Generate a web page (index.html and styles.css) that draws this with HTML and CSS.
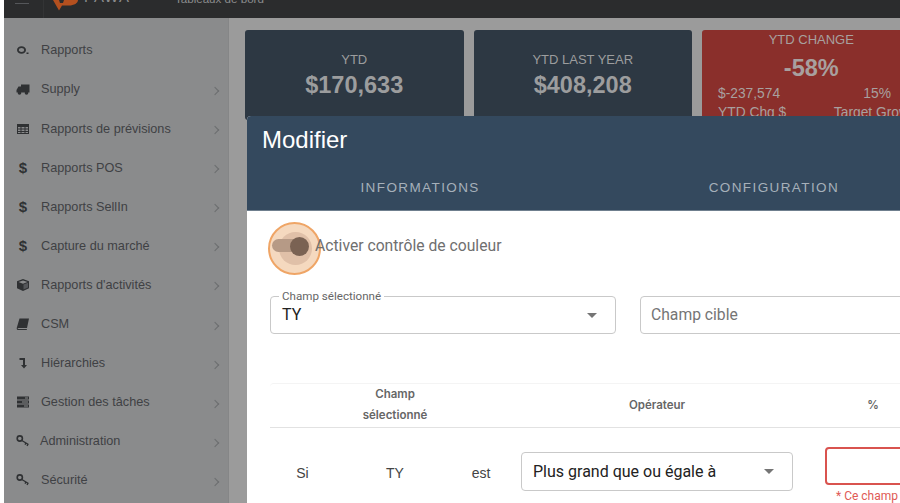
FILE: index.html
```html
<!DOCTYPE html>
<html lang="fr">
  <head>
    <meta charset="UTF-8" />
    <title>Tableaux de bord</title>
    <link rel="stylesheet" href="styles.css">
  </head>
  <body>
    <div class="app">
      <header class="topbar">
        <div class="burger"><span></span></div>
        <svg class="logo" viewBox="0 0 26 11" width="26" height="11"><path d="M0 0L6 10.500 9 5.500H16C21 5.500 25 3 25 0H11L10 3 7 3 6 0z" fill="#b4501f"/></svg>
        <span class="brand">PAWA</span>
        <span class="page-title">Tableaux de bord</span>
      </header>
      <div class="body-row">
        <nav class="sidebar">
          <a class="nav-item">
            <svg class="ico" viewBox="0 0 14 14"><ellipse cx="5.500" cy="7" rx="3.600" ry="2.800" fill="none" stroke="#2f3133" stroke-width="1.800"/><path d="M10.500 9.500h2v1.500h-2z" fill="#2f3133"/></svg>
            <span class="label">Rapports</span>
          </a>
          <a class="nav-item">
            <svg class="ico" viewBox="0 0 14 14"><path d="M5 2.500h8.500v8H5z" fill="#2f3133"/><path d="M.5 8l2-3.500H5v6H.5z" fill="#2f3133"/><circle cx="3.500" cy="11" r="1.800" fill="#2f3133"/><circle cx="10.500" cy="11" r="1.800" fill="#2f3133"/></svg>
            <span class="label">Supply</span><span class="chev"></span>
          </a>
          <a class="nav-item">
            <svg class="ico" viewBox="0 0 14 14"><path fill-rule="evenodd" d="M1 2h12v10H1zM2 5v1.500h2.500V5zM5.500 5v1.500H8.500V5zM9.500 5v1.500H12V5zM2 7.500V9h2.500V7.500zM5.500 7.500V9H8.500V7.500zM9.500 7.500V9H12V7.500zM2 10v1h2.500v-1zM5.500 10v1H8.500v-1zM9.500 10v1H12v-1z" fill="#2f3133"/></svg>
            <span class="label">Rapports de prévisions</span><span class="chev"></span>
          </a>
          <a class="nav-item">
            <span class="ico-dollar">$</span>
            <span class="label">Rapports POS</span><span class="chev"></span>
          </a>
          <a class="nav-item">
            <span class="ico-dollar">$</span>
            <span class="label">Rapports SellIn</span><span class="chev"></span>
          </a>
          <a class="nav-item">
            <span class="ico-dollar">$</span>
            <span class="label">Capture du marché</span><span class="chev"></span>
          </a>
          <a class="nav-item">
            <svg class="ico" viewBox="0 0 14 14"><path d="M7 1l6 2.200v7L7 13 1 10.200v-7z" fill="#2f3133"/><path d="M2.500 4L7 5.800 11.500 4 7 2.400z" fill="#8a8b8c"/><path d="M7.500 6.500v5l4.500-2V4.800z" fill="#55575a"/></svg>
            <span class="label">Rapports d'activités</span><span class="chev"></span>
          </a>
          <a class="nav-item">
            <svg class="ico" viewBox="0 0 14 14"><path d="M3.500 1.500H13L11 11H2.500C1.500 11 1 12 2.500 12H11l-.3 1H2C.5 13 .5 11.500 1 10z" fill="#2f3133"/></svg>
            <span class="label">CSM</span><span class="chev"></span>
          </a>
          <a class="nav-item">
            <svg class="ico" viewBox="0 0 14 14"><path d="M3.500 2H9v7h2l-3 3.500L5 9h2V4H3.500z" fill="#2f3133"/></svg>
            <span class="label">Hiérarchies</span><span class="chev"></span>
          </a>
          <a class="nav-item">
            <svg class="ico" viewBox="0 0 14 14"><path d="M1 1.500h12v3H1zM1 5.500h12v3H1zM1 9.500h12v3H1z" fill="#2f3133"/><path d="M9 2.500h3v1H9zM6 6.500h6v1H6zM8 10.500h4v1H8z" fill="#8a8b8c"/></svg>
            <span class="label">Gestion des tâches</span><span class="chev"></span>
          </a>
          <a class="nav-item nav-admin">
            <svg class="ico" viewBox="0 0 14 14"><circle cx="3.800" cy="4.500" r="2.600" fill="none" stroke="#2f3133" stroke-width="1.600"/><path d="M5.800 6.500L12.500 10.500M10 9l-1 1.700M12 10.200l-1 1.700" fill="none" stroke="#2f3133" stroke-width="1.400"/></svg>
            <span class="label">Administration</span><span class="chev"></span>
          </a>
          <a class="nav-item">
            <svg class="ico" viewBox="0 0 14 14"><circle cx="3.800" cy="4.500" r="2.600" fill="none" stroke="#2f3133" stroke-width="1.600"/><path d="M5.800 6.500L12.500 10.500M10 9l-1 1.700M12 10.200l-1 1.700" fill="none" stroke="#2f3133" stroke-width="1.400"/></svg>
            <span class="label">Sécurité</span><span class="chev"></span>
          </a>
        </nav>
        <main class="content">
          <div class="cards">
            <div class="card card-dark">
              <div class="card-title">YTD</div>
              <div class="card-value">$170,633</div>
            </div>
            <div class="card card-dark">
              <div class="card-title">YTD LAST YEAR</div>
              <div class="card-value">$408,208</div>
            </div>
            <div class="card card-red">
              <div class="card-title">YTD CHANGE</div>
              <div class="card-value">-58%</div>
              <div class="card-split">
                <div><div class="split-num">$-237,574</div><div class="split-name">YTD Chg $</div></div>
                <div class="split-right"><div class="split-num">15%</div><div class="split-name">Target Growth</div></div>
              </div>
            </div>
          </div>
        </main>
      </div>

      <section class="modal">
        <div class="modal-head">
          <h2>Modifier</h2>
          <div class="tabs">
            <div class="tab">INFORMATIONS</div>
            <div class="tab">CONFIGURATION</div>
          </div>
        </div>
        <div class="modal-body">
          <div class="switch-row">
            <span class="switch">
              <span class="ripple"></span>
              <span class="track"></span>
              <span class="thumb"></span>
            </span>
            <span class="switch-label">Activer contrôle de couleur</span>
          </div>
          <div class="fields">
            <div class="field field-select">
              <span class="field-legend">Champ sélectionné</span>
              <span class="field-value">TY</span>
              <span class="caret"></span>
            </div>
            <div class="field field-target">
              <span class="field-hint">Champ cible</span>
            </div>
          </div>
          <div class="rules">
            <div class="rules-row rules-head">
              <div class="col-si"></div>
              <div class="col-field">Champ sélectionné</div>
              <div class="col-est"></div>
              <div class="col-op">Opérateur</div>
              <div class="col-pct">%</div>
            </div>
            <div class="rules-row rules-line">
              <div class="col-si">Si</div>
              <div class="col-field">TY</div>
              <div class="col-est">est</div>
              <div class="col-op">
                <div class="op-select"><span>Plus grand que ou égale à</span><span class="caret"></span></div>
              </div>
              <div class="col-pct">
                <div class="pct-input"></div>
                <div class="pct-error">* Ce champ est requis</div>
              </div>
            </div>
          </div>
        </div>
      </section>
    </div>
  </body>
</html>
```

FILE: styles.css
```css
* {
  margin: 0;
  padding: 0;
  box-sizing: border-box;
}
html,
body {
  width: 900px;
  height: 503px;
  overflow: hidden;
  background-color: #fff;
  font-family: "Liberation Sans", Arial, sans-serif;
}
.app {
  position: relative;
  width: 896px;
  height: 503px;
  margin-left: 4px;
  overflow: hidden;
}
.topbar {
  height: 18px;
  background-color: #2b2c2d;
  display: flex;
  align-items: flex-start;
  color: #8b8c8d;
  overflow: hidden;
}
.burger {
  width: 40px;
  height: 18px;
  padding: 3px 0 0 11px;
  border-right: 1px solid #333435;
}
.burger span {
  display: block;
  width: 14px;
  height: 1px;
  background-color: #55575a;
}
.logo {
  margin-left: 9px;
}
.brand {
  margin: -11px 0 0 5px;
  font-size: 15px;
  line-height: 15px;
  letter-spacing: 1px;
}
.page-title {
  margin: -8px 0 0 45px;
  font-size: 11.600px;
  line-height: 14px;
}
.body-row {
  display: flex;
  height: 485px;
}
.sidebar {
  width: 225px;
  background-color: #8a8b8c;
  border-right: 1px solid #858687;
  padding-top: 12.800px;
}
.nav-item {
  display: flex;
  align-items: center;
  height: 39.100px;
  padding-left: 12px;
  color: #3f4144;
  font-size: 12.700px;
}
.ico {
  width: 14px;
  height: 14px;
  flex-shrink: 0;
}
.ico-dollar {
  width: 14px;
  text-align: center;
  font-size: 15px;
  font-weight: bold;
  color: #2f3133;
}
.label {
  margin-left: 11px;
  flex: 1;
}
.nav-admin .label {
  margin-left: 10px;
}
.chev {
  width: 6px;
  height: 6px;
  margin-right: 10px;
  margin-top: 3px;
  border-top: 1px solid #6b6d6f;
  border-right: 1px solid #6b6d6f;
  transform: rotate(45deg);
}
.content {
  flex: 1;
  background-color: #9b9b9b;
  padding: 12px 0 0 16px;
  overflow: hidden;
}
.cards {
  display: flex;
  gap: 10px;
  width: 720px;
}
.card {
  width: 218.500px;
  height: 90px;
  flex-shrink: 0;
  border-radius: 3px;
  color: #9c9d9e;
  text-align: center;
}
.card-dark {
  background-color: #2d3843;
  padding-top: 22px;
}
.card-red {
  background-color: #8a2f2b;
  padding-top: 2px;
  color: #a8a09f;
}
.card-title {
  font-size: 13px;
  line-height: 16px;
}
.card-value {
  font-size: 23.500px;
  font-weight: bold;
  line-height: 31px;
  margin-top: 2px;
}
.card-red .card-value {
  margin-top: 3px;
  line-height: 34px;
}
.card-split {
  display: flex;
  justify-content: space-between;
  padding-left: 16px;
  font-size: 13.800px;
  text-align: left;
}
.split-num {
  line-height: 17px;
}
.split-name {
  line-height: 17px;
  margin-top: 2px;
  white-space: nowrap;
}
.split-right {
  text-align: center;
}
/* modal sits over the dimmed dashboard */
.modal {
  position: absolute;
  left: 243px;
  top: 116px;
  width: 700px;
  height: 420px;
  background-color: #fff;
  border-radius: 4px 0 0 0;
}
.modal-head {
  height: 95px;
  background-color: #34495e;
  border-bottom: 1px solid #6f7f8e;
  border-radius: 4px 0 0 0;
}
.modal-head h2 {
  font-size: 24px;
  font-weight: normal;
  color: #fff;
  line-height: 28px;
  padding: 10px 0 0 15px;
}
.tabs {
  display: flex;
  gap: 7.500px;
  margin-top: 24px;
}
.tab {
  width: 347px;
  text-align: center;
  color: #a6b0ba;
  font-size: 13.500px;
  letter-spacing: 1.400px;
  line-height: 20px;
}
.modal-body {
  padding-left: 23px;
}
.switch-row {
  display: flex;
  align-items: center;
  height: 68px;
}
.switch {
  position: relative;
  display: block;
  width: 44px;
  height: 20px;
}
.ripple {
  position: absolute;
  left: -2px;
  top: -13px;
  width: 53px;
  height: 53px;
  border-radius: 50%;
  background-color: #f5d9bf;
  border: 2px solid #efa566;
}
.ripple::after {
  content: "";
  position: absolute;
  left: 9px;
  top: 8px;
  width: 33px;
  height: 33px;
  border-radius: 50%;
  background-color: #e0c0a8;
}
.track {
  position: absolute;
  left: 2px;
  top: 4px;
  width: 33px;
  height: 13px;
  border-radius: 7px;
  background-color: #b69a86;
}
.thumb {
  position: absolute;
  left: 20px;
  top: 2px;
  width: 19px;
  height: 19px;
  border-radius: 50%;
  background-color: #7a6253;
}
.switch-label {
  position: relative;
  margin: 1px 0 0 1px;
  font-family: Roboto, "Liberation Sans", sans-serif;
  font-size: 15.700px;
  line-height: 20px;
  color: #6f6f6f;
}
.fields {
  display: flex;
  gap: 24px;
  margin-top: 17px;
}
.field {
  position: relative;
  height: 38px;
  flex-shrink: 0;
  border: 1px solid #c9c9c9;
  border-radius: 4px;
  display: flex;
  align-items: center;
  padding: 0 11px;
  font-family: Roboto, "Liberation Sans", sans-serif;
}
.field-select {
  width: 346px;
  justify-content: space-between;
  padding-right: 18px;
}
.field-target {
  width: 400px;
  padding-left: 10px;
}
.field-legend {
  position: absolute;
  left: 8px;
  top: -7px;
  padding: 0 3px;
  background-color: #fff;
  font-size: 11.600px;
  line-height: 13px;
  color: #666;
}
.field-value {
  font-size: 16px;
  line-height: 18px;
  padding-bottom: 1px;
  color: #222;
}
.field-hint {
  font-size: 15.700px;
  line-height: 18px;
  padding-bottom: 1px;
  color: #757575;
}
.caret {
  width: 0;
  height: 0;
  border-left: 5px solid transparent;
  border-right: 5px solid transparent;
  border-top: 5px solid #757575;
}
.rules {
  margin-top: 49px;
  width: 700px;
  border-top: 1px solid #f4f4f4;
  border-radius: 4px 0 0 0;
}
.rules-row {
  display: flex;
  align-items: center;
}
.rules-head {
  height: 44px;
  border-bottom: 1px solid #e2e2e2;
  font-family: Inter, "Liberation Sans", sans-serif;
  font-size: 11.500px;
  font-weight: 600;
  color: #666;
  line-height: 21px;
  text-align: center;
}
.rules-head .col-field {
  padding: 0 25px 2px;
}
.rules-line {
  height: 90px;
  font-size: 14px;
  color: #444;
  text-align: center;
}
.col-si {
  width: 65px;
  flex-shrink: 0;
}
.col-field {
  width: 120px;
  flex-shrink: 0;
}
.col-est {
  width: 52px;
  flex-shrink: 0;
}
.col-op {
  width: 272px;
  margin-left: 14px;
  flex-shrink: 0;
}
.col-pct {
  width: 96px;
  margin-left: 32px;
  flex-shrink: 0;
}
.op-select {
  display: flex;
  justify-content: space-between;
  align-items: center;
  height: 39px;
  margin-bottom: 4px;
  border: 1px solid #c9c9c9;
  border-radius: 4px;
  padding: 0 18px 0 11px;
  font-family: Roboto, "Liberation Sans", sans-serif;
  font-size: 16px;
  color: #222;
  text-align: left;
}
.pct-input {
  height: 38px;
  margin-top: 4px;
  border: 2px solid #d9534f;
  border-radius: 4px;
}
.pct-error {
  margin-top: 4px;
  font-family: Roboto, "Liberation Sans", sans-serif;
  font-size: 12px;
  line-height: 14px;
  color: #e05a55;
  text-align: left;
  padding-left: 11px;
  white-space: nowrap;
}
```
